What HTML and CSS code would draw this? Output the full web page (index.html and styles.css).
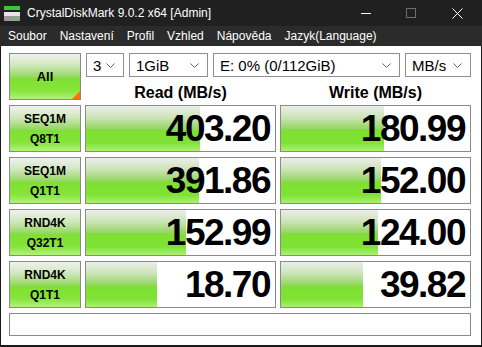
FILE: index.html
```html
<!DOCTYPE html>
<html lang="cs">
<head>
<meta charset="utf-8">
<title>CrystalDiskMark</title>
<link rel="stylesheet" href="styles.css">
</head>
<body>
<div class="window">
  <div class="titlebar">
    <svg class="app-icon" width="18" height="16" viewBox="0 0 18 16">
      <rect x="0" y="0" width="16" height="4" fill="#3cc43c"/>
      <rect x="0" y="6" width="16" height="4" fill="#e6e6e6"/>
      <rect x="0" y="10" width="16" height="5" fill="#9a9a9a"/>
      <rect x="10" y="11" width="3" height="2" fill="#43e043"/>
    </svg>
    <span class="title">CrystalDiskMark 9.0.2 x64 [Admin]</span>
    <div class="controls">
      <svg class="ctl ctl-min" width="10" height="10" viewBox="0 0 10 10"><line x1="0" y1="5.5" x2="10" y2="5.5" stroke="#ffffff" stroke-width="1"/></svg>
      <svg class="ctl ctl-max" width="10" height="10" viewBox="0 0 10 10"><rect x="0.5" y="0.5" width="9" height="9" fill="none" stroke="#6e6e6e" stroke-width="1"/></svg>
      <svg class="ctl ctl-close" width="11" height="11" viewBox="0 0 11 11"><path d="M0.5 0.5 L10.5 10.5 M10.5 0.5 L0.5 10.5" stroke="#ffffff" stroke-width="1"/></svg>
    </div>
  </div>
  <div class="menubar">
    <span class="menu-item">Soubor</span>
    <span class="menu-item">Nastavení</span>
    <span class="menu-item">Profil</span>
    <span class="menu-item">Vzhled</span>
    <span class="menu-item">Nápověda</span>
    <span class="menu-item">Jazyk(Language)</span>
  </div>
  <div class="content">
    <div class="grid">
      <div class="btn all-btn">All<span class="corner"></span></div>
      <div class="selects">
        <div class="select sel-count">3<svg class="chev" width="9" height="5" viewBox="0 0 9 5"><path d="M0.5 0.5 L4.5 4.5 L8.5 0.5" fill="none" stroke="#606060"/></svg></div>
        <div class="select sel-size">1GiB<svg class="chev" width="9" height="5" viewBox="0 0 9 5"><path d="M0.5 0.5 L4.5 4.5 L8.5 0.5" fill="none" stroke="#606060"/></svg></div>
        <div class="select sel-drive">E: 0% (0/112GiB)<svg class="chev" width="9" height="5" viewBox="0 0 9 5"><path d="M0.5 0.5 L4.5 4.5 L8.5 0.5" fill="none" stroke="#606060"/></svg></div>
        <div class="select sel-unit">MB/s<svg class="chev" width="9" height="5" viewBox="0 0 9 5"><path d="M0.5 0.5 L4.5 4.5 L8.5 0.5" fill="none" stroke="#606060"/></svg></div>
      </div>
      <div class="hdr">Read (MB/s)</div>
      <div class="hdr">Write (MB/s)</div>

      <div class="btn label-btn"><span>SEQ1M</span><span>Q8T1</span></div>
      <div class="cell" style="--fill:114px">403.20</div>
      <div class="cell" style="--fill:103px">180.99</div>

      <div class="btn label-btn"><span>SEQ1M</span><span>Q1T1</span></div>
      <div class="cell" style="--fill:113px">391.86</div>
      <div class="cell" style="--fill:100px">152.00</div>

      <div class="btn label-btn"><span>RND4K</span><span>Q32T1</span></div>
      <div class="cell" style="--fill:100px">152.99</div>
      <div class="cell" style="--fill:97px">124.00</div>

      <div class="btn label-btn"><span>RND4K</span><span>Q1T1</span></div>
      <div class="cell" style="--fill:71px">18.70</div>
      <div class="cell" style="--fill:82px">39.82</div>

      <div class="comment"></div>
    </div>
  </div>
</div>
</body>
</html>
```

FILE: styles.css
```css
* { box-sizing: border-box; }
html, body { margin: 0; padding: 0; background: #ffffff; }
body {
  width: 482px;
  height: 347px;
  overflow: hidden;
  font-family: "Liberation Sans", Arial, sans-serif;
}
.window {
  width: 482px;
  height: 347px;
  display: flex;
  flex-direction: column;
}
.titlebar {
  height: 26px;
  background: #202020;
  display: flex;
  align-items: center;
  color: #ffffff;
  font-size: 12px;
}
.app-icon { margin-left: 4px; margin-top: 2px; flex: none; }
.title { margin-left: 5px; letter-spacing: 0; }
.controls {
  margin-left: auto;
  display: flex;
  align-items: center;
  height: 26px;
}
.ctl { display: block; }
.ctl-min { margin-right: 35px; }
.ctl-max { margin-right: 36px; }
.ctl-close { margin-right: 19px; }

.menubar {
  height: 20px;
  background: #2b2b2b;
  display: flex;
  align-items: center;
  padding-left: 8px;
  gap: 13px;
  color: #ffffff;
  font-size: 12px;
}

.content {
  flex: 1;
  background: #ffffff;
  border-left: 1px solid #1a1a1a;
  border-right: 1px solid #1a1a1a;
  border-bottom: 2px solid #1a1a1a;
  padding: 7px 0 0 8px;
}
.grid {
  display: grid;
  grid-template-columns: 72px 191px 191px;
  grid-template-rows: 24px 18px 47px 47px 47px 47px 23px;
  column-gap: 4px;
  row-gap: 5px;
}

.btn {
  border: 1px solid #8a8a8a;
  background: linear-gradient(180deg, #eff1ed 0%, #cfe7bb 26%, #98d866 50%, #80e032 55%, #84e438 80%, #b2f27a 100%);
  color: #000000;
  font-weight: bold;
  font-size: 12px;
  display: flex;
  flex-direction: column;
  align-items: center;
  justify-content: center;
}
.all-btn {
  grid-row: 1 / span 2;
  position: relative;
  font-size: 13px;
}
.corner {
  position: absolute;
  right: 0;
  bottom: 0;
  width: 0;
  height: 0;
  border-style: solid;
  border-width: 0 0 8px 8px;
  border-color: transparent transparent #ff7300 transparent;
}
.label-btn span { line-height: 20px; }

.selects {
  grid-column: 2 / span 2;
  display: flex;
  gap: 5px;
  padding-left: 1px;
}
.select {
  height: 24px;
  border: 1px solid #8f8f8f;
  background: #ffffff;
  font-size: 15px;
  color: #000000;
  display: flex;
  align-items: center;
  padding-left: 6px;
  padding-right: 8px;
}
.chev { margin-left: auto; flex: none; }
.sel-count { width: 38px; }
.sel-size { width: 79px; }
.sel-drive { width: 187px; }
.sel-unit { width: 66px; }

.hdr {
  font-weight: bold;
  font-size: 16px;
  line-height: 18px;
  text-align: center;
  padding-top: 2px;
  color: #000000;
}

.cell {
  border: 1px solid #8a8a8a;
  background-color: #ffffff;
  background-image: linear-gradient(180deg, #eceeea 0%, #cbe4b6 26%, #96d664 50%, #7ee030 55%, #80e234 82%, #abf072 100%);
  background-repeat: no-repeat;
  background-size: var(--fill) 100%;
  font-weight: bold;
  font-size: 37px;
  letter-spacing: -1.5px;
  line-height: 45px;
  text-align: right;
  padding-right: 5px;
  color: #000000;
}

.comment {
  grid-column: 1 / span 3;
  border: 1px solid #8a8a8a;
  background: #ffffff;
}
```
